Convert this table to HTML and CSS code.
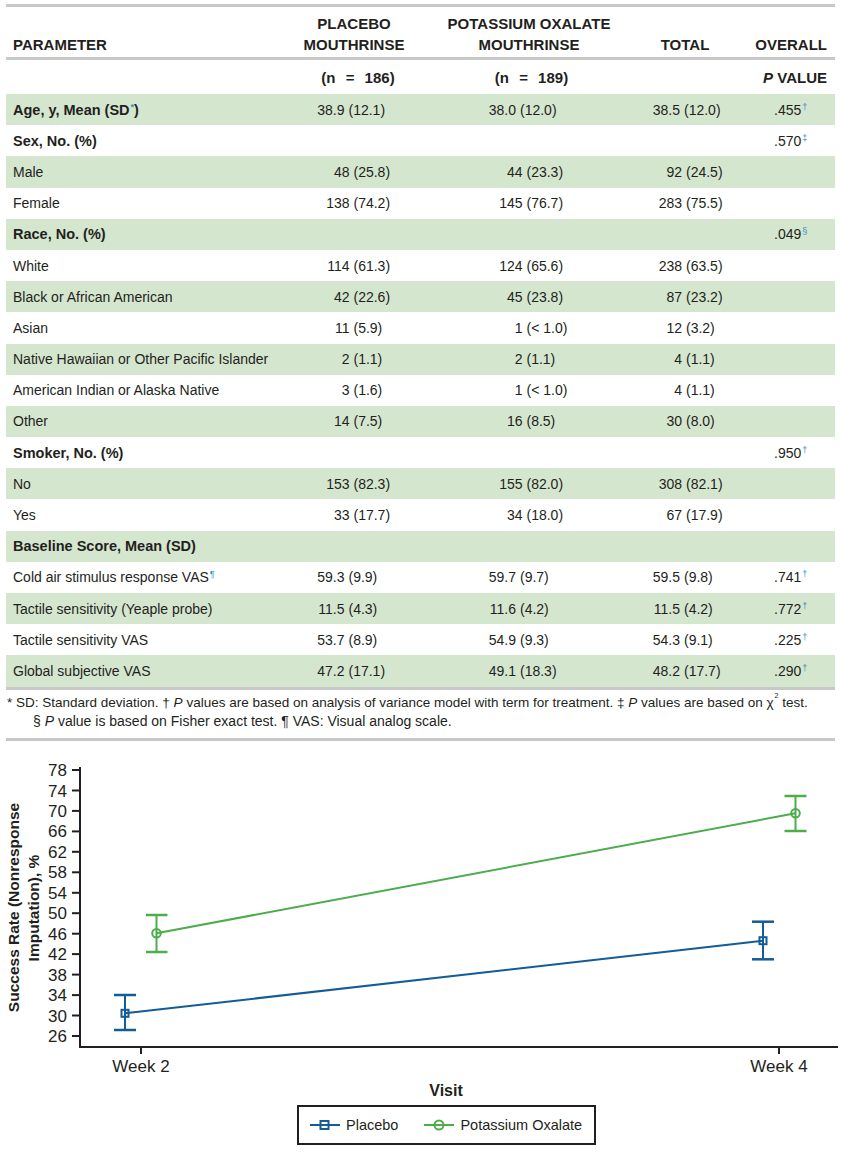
FILE: index.html
```html
<!DOCTYPE html>
<html lang="en">
<head>
<meta charset="utf-8">
<title>Demographics and success rate</title>
<link rel="stylesheet" href="styles.css">
</head>
<body>
<div class="page">
  <div class="tbl">
    <div class="row hrow">
      <div class="c1">PARAMETER</div>
      <div class="c2 ctr">PLACEBO<br>MOUTHRINSE</div>
      <div class="c3 ctr">POTASSIUM OXALATE<br>MOUTHRINSE</div>
      <div class="c4 ctr">TOTAL</div>
      <div class="c5 rgt">OVERALL</div>
    </div>
    <div class="row nrow">
      <div class="c1"></div>
      <div class="c2 ctr n2">(n = 186)</div>
      <div class="c3 ctr n3">(n = 189)</div>
      <div class="c4"></div>
      <div class="c5 rgt"><i>P</i> VALUE</div>
    </div>
    <div class="tbody">
      <div class="row brow grp">
        <div class="c1">Age, y, Mean (SD<sup class="fn">*</sup>)</div>
        <div class="v v2 m"><span class="l">38.9</span>(12.1)</div>
        <div class="v v3 m"><span class="l">38.0</span>(12.0)</div>
        <div class="v v4 m"><span class="l">38.5</span>(12.0)</div>
        <div class="pv">.455<sup class="fn">†</sup></div>
      </div>
      <div class="row brow grp">
        <div class="c1">Sex, No. (%)</div>
        <div></div><div></div><div></div>
        <div class="pv">.570<sup class="fn">‡</sup></div>
      </div>
      <div class="row brow">
        <div class="c1">Male</div>
        <div class="v v2"><span class="l">48</span>(25.8)</div>
        <div class="v v3"><span class="l">44</span>(23.3)</div>
        <div class="v v4"><span class="l">92</span>(24.5)</div>
        <div class="pv"></div>
      </div>
      <div class="row brow">
        <div class="c1">Female</div>
        <div class="v v2"><span class="l">138</span>(74.2)</div>
        <div class="v v3"><span class="l">145</span>(76.7)</div>
        <div class="v v4"><span class="l">283</span>(75.5)</div>
        <div class="pv"></div>
      </div>
      <div class="row brow grp">
        <div class="c1">Race, No. (%)</div>
        <div></div><div></div><div></div>
        <div class="pv">.049<sup class="fn">§</sup></div>
      </div>
      <div class="row brow">
        <div class="c1">White</div>
        <div class="v v2"><span class="l">114</span>(61.3)</div>
        <div class="v v3"><span class="l">124</span>(65.6)</div>
        <div class="v v4"><span class="l">238</span>(63.5)</div>
        <div class="pv"></div>
      </div>
      <div class="row brow">
        <div class="c1">Black or African American</div>
        <div class="v v2"><span class="l">42</span>(22.6)</div>
        <div class="v v3"><span class="l">45</span>(23.8)</div>
        <div class="v v4"><span class="l">87</span>(23.2)</div>
        <div class="pv"></div>
      </div>
      <div class="row brow">
        <div class="c1">Asian</div>
        <div class="v v2"><span class="l">11</span>(5.9)</div>
        <div class="v v3"><span class="l">1</span>(&lt; 1.0)</div>
        <div class="v v4"><span class="l">12</span>(3.2)</div>
        <div class="pv"></div>
      </div>
      <div class="row brow">
        <div class="c1">Native Hawaiian or Other Pacific Islander</div>
        <div class="v v2"><span class="l">2</span>(1.1)</div>
        <div class="v v3"><span class="l">2</span>(1.1)</div>
        <div class="v v4"><span class="l">4</span>(1.1)</div>
        <div class="pv"></div>
      </div>
      <div class="row brow">
        <div class="c1">American Indian or Alaska Native</div>
        <div class="v v2"><span class="l">3</span>(1.6)</div>
        <div class="v v3"><span class="l">1</span>(&lt; 1.0)</div>
        <div class="v v4"><span class="l">4</span>(1.1)</div>
        <div class="pv"></div>
      </div>
      <div class="row brow">
        <div class="c1">Other</div>
        <div class="v v2"><span class="l">14</span>(7.5)</div>
        <div class="v v3"><span class="l">16</span>(8.5)</div>
        <div class="v v4"><span class="l">30</span>(8.0)</div>
        <div class="pv"></div>
      </div>
      <div class="row brow grp">
        <div class="c1">Smoker, No. (%)</div>
        <div></div><div></div><div></div>
        <div class="pv">.950<sup class="fn">†</sup></div>
      </div>
      <div class="row brow">
        <div class="c1">No</div>
        <div class="v v2"><span class="l">153</span>(82.3)</div>
        <div class="v v3"><span class="l">155</span>(82.0)</div>
        <div class="v v4"><span class="l">308</span>(82.1)</div>
        <div class="pv"></div>
      </div>
      <div class="row brow">
        <div class="c1">Yes</div>
        <div class="v v2"><span class="l">33</span>(17.7)</div>
        <div class="v v3"><span class="l">34</span>(18.0)</div>
        <div class="v v4"><span class="l">67</span>(17.9)</div>
        <div class="pv"></div>
      </div>
      <div class="row brow grp">
        <div class="c1">Baseline Score, Mean (SD)</div>
        <div></div><div></div><div></div><div></div>
      </div>
      <div class="row brow">
        <div class="c1">Cold air stimulus response VAS<sup class="fn">¶</sup></div>
        <div class="v v2 m"><span class="l">59.3</span>(9.9)</div>
        <div class="v v3 m"><span class="l">59.7</span>(9.7)</div>
        <div class="v v4 m"><span class="l">59.5</span>(9.8)</div>
        <div class="pv">.741<sup class="fn">†</sup></div>
      </div>
      <div class="row brow">
        <div class="c1">Tactile sensitivity (Yeaple probe)</div>
        <div class="v v2 m"><span class="l">11.5</span>(4.3)</div>
        <div class="v v3 m"><span class="l">11.6</span>(4.2)</div>
        <div class="v v4 m"><span class="l">11.5</span>(4.2)</div>
        <div class="pv">.772<sup class="fn">†</sup></div>
      </div>
      <div class="row brow">
        <div class="c1">Tactile sensitivity VAS</div>
        <div class="v v2 m"><span class="l">53.7</span>(8.9)</div>
        <div class="v v3 m"><span class="l">54.9</span>(9.3)</div>
        <div class="v v4 m"><span class="l">54.3</span>(9.1)</div>
        <div class="pv">.225<sup class="fn">†</sup></div>
      </div>
      <div class="row brow">
        <div class="c1">Global subjective VAS</div>
        <div class="v v2 m"><span class="l">47.2</span>(17.1)</div>
        <div class="v v3 m"><span class="l">49.1</span>(18.3)</div>
        <div class="v v4 m"><span class="l">48.2</span>(17.7)</div>
        <div class="pv">.290<sup class="fn">†</sup></div>
      </div>
    </div>
  </div>

  <div class="notes">
    <div class="note1">* SD: Standard deviation. † <i>P</i> values are based on analysis of variance model with term for treatment. ‡ <i>P</i> values are based on <span class="chi">χ<sup>2</sup></span> test.</div>
    <div class="note2">§ <i>P</i> value is based on Fisher exact test. ¶ VAS: Visual analog scale.</div>
  </div>
  <div class="rule"></div>

  <svg class="chart" width="841" height="355" viewBox="0 745 841 355">
    <g class="ax">
      <line x1="80" y1="767" x2="80" y2="1048"/>
      <line x1="79" y1="1047" x2="838" y2="1047"/>
      <line x1="72" y1="770" x2="80" y2="770"/>
      <line x1="72" y1="790.5" x2="80" y2="790.5"/>
      <line x1="72" y1="810.9" x2="80" y2="810.9"/>
      <line x1="72" y1="831.4" x2="80" y2="831.4"/>
      <line x1="72" y1="851.8" x2="80" y2="851.8"/>
      <line x1="72" y1="872.3" x2="80" y2="872.3"/>
      <line x1="72" y1="892.8" x2="80" y2="892.8"/>
      <line x1="72" y1="913.2" x2="80" y2="913.2"/>
      <line x1="72" y1="933.7" x2="80" y2="933.7"/>
      <line x1="72" y1="954.1" x2="80" y2="954.1"/>
      <line x1="72" y1="974.6" x2="80" y2="974.6"/>
      <line x1="72" y1="995.1" x2="80" y2="995.1"/>
      <line x1="72" y1="1015.5" x2="80" y2="1015.5"/>
      <line x1="72" y1="1036" x2="80" y2="1036"/>
      <line x1="141" y1="1047" x2="141" y2="1054"/>
      <line x1="779" y1="1047" x2="779" y2="1054"/>
    </g>
    <g class="ytl">
      <text x="67" y="776">78</text>
      <text x="67" y="796.5">74</text>
      <text x="67" y="816.9">70</text>
      <text x="67" y="837.4">66</text>
      <text x="67" y="857.8">62</text>
      <text x="67" y="878.3">58</text>
      <text x="67" y="898.8">54</text>
      <text x="67" y="919.2">50</text>
      <text x="67" y="939.7">46</text>
      <text x="67" y="960.1">42</text>
      <text x="67" y="980.6">38</text>
      <text x="67" y="1001.1">34</text>
      <text x="67" y="1021.5">30</text>
      <text x="67" y="1042">26</text>
    </g>
    <g class="xtl">
      <text x="141" y="1072">Week 2</text>
      <text x="779" y="1072">Week 4</text>
    </g>
    <text class="xtitle" x="446" y="1096">Visit</text>
    <text class="ytitle" transform="translate(18.5 907.5) rotate(-90)">Success Rate (Nonresponse</text>
    <text class="ytitle" transform="translate(38.5 908) rotate(-90)">Imputation), %</text>

    <g class="ser blue">
      <line x1="125" y1="1013.3" x2="763" y2="940.7"/>
      <line x1="125" y1="995" x2="125" y2="1030"/>
      <line class="cap" x1="114" y1="995" x2="136" y2="995"/>
      <line class="cap" x1="114" y1="1030" x2="136" y2="1030"/>
      <rect x="121.5" y="1009.8" width="7" height="7"/>
      <line x1="763" y1="921.7" x2="763" y2="959.3"/>
      <line class="cap" x1="752" y1="921.7" x2="774" y2="921.7"/>
      <line class="cap" x1="752" y1="959.3" x2="774" y2="959.3"/>
      <rect x="759.5" y="937.2" width="7" height="7"/>
    </g>
    <g class="ser green">
      <line x1="156.5" y1="933.3" x2="795.5" y2="813.3"/>
      <line x1="156.5" y1="915" x2="156.5" y2="952"/>
      <line class="cap" x1="146" y1="915" x2="167.5" y2="915"/>
      <line class="cap" x1="146" y1="952" x2="167.5" y2="952"/>
      <circle cx="156.5" cy="933.3" r="4.3"/>
      <line x1="795.5" y1="796" x2="795.5" y2="831"/>
      <line class="cap" x1="784.5" y1="796" x2="806.5" y2="796"/>
      <line class="cap" x1="784.5" y1="831" x2="806.5" y2="831"/>
      <circle cx="795.5" cy="813.3" r="4.3"/>
    </g>
  </svg>

  <div class="legend">
    <div class="item">
      <svg class="key" width="30" height="14" viewBox="0 0 30 14">
        <g class="ser blue">
          <line x1="0" y1="7" x2="30" y2="7"/>
          <rect x="10.5" y="3" width="8" height="8"/>
        </g>
      </svg>
      <span>Placebo</span>
    </div>
    <div class="item item2">
      <svg class="key" width="30" height="14" viewBox="0 0 30 14">
        <g class="ser green">
          <line x1="0" y1="7" x2="30" y2="7"/>
          <circle cx="15" cy="7" r="4.5"/>
        </g>
      </svg>
      <span>Potassium Oxalate</span>
    </div>
  </div>
</div>
</body>
</html>
```

FILE: styles.css
```css
* { box-sizing: border-box; }
html, body { background: #ffffff; }
body {
  margin: 0;
  color: #231f20;
  font-family: "Liberation Sans", Arial, sans-serif;
}
.page {
  width: 841px;
  padding: 4px 6px 0;
}

/* table */
.tbl {
  border-top: 3px solid #c8c8c8;
  border-bottom: 3px solid #c8c8c8;
}
.row {
  display: grid;
  grid-template-columns: 294px 108px 242px 70px 115px;
  white-space: nowrap;
}
.c1 { padding-left: 7px; }
.ctr { text-align: center; }
.rgt { text-align: right; padding-right: 8px; }

.hrow {
  height: 53px;
  align-items: end;
  padding-bottom: 2px;
  border-bottom: 3px solid #c8c8c8;
  font-weight: bold;
  font-size: 15px;
  line-height: 21px;
}
.nrow {
  height: 34px;
  align-items: center;
  font-weight: bold;
  font-size: 15px;
  word-spacing: 6px;
}
.nrow .c5 { word-spacing: 0; }
.n2 { padding-left: 8px; }
.n3 { padding-left: 5px; }

.brow {
  height: 31.2px;
  align-items: center;
  font-size: 14px;
}
.tbody .brow:nth-child(odd) { background: #d5e6cf; }
.grp .c1 { font-weight: bold; font-size: 14.5px; }

.v .l {
  display: inline-block;
  width: 30px;
  margin-right: 4px;
  text-align: right;
}
.v2 { padding-left: 19.5px; }
.v2.m { padding-left: 14.5px; }
.v3 { padding-left: 84.5px; }
.v3.m { padding-left: 78px; }
.v4 { padding-left: 2px; }
.v4.m { padding-left: 0; }
.pv { padding-left: 54px; }

.fn {
  color: #3a8cc9;
  font-size: 9px;
  line-height: 0;
  vertical-align: 5px;
  margin-left: 1px;
}

/* notes */
.notes {
  margin-top: 3px;
  font-size: 14px;
  line-height: 19px;
  white-space: nowrap;
}
.note1 { padding-left: 1px; font-size: 13.5px; }
.note2 { padding-left: 27px; }
.chi sup {
  font-size: 7px;
  line-height: 0;
  vertical-align: 9px;
  margin-left: 1px;
}
.rule {
  margin-top: 7px;
  border-top: 3px solid #c8c8c8;
}

/* chart */
.chart {
  display: block;
  margin: 4px 0 0 -6px;
  overflow: visible;
}
.ax line { stroke: #231f20; stroke-width: 2; }
.ytl text {
  font-family: "Liberation Sans", Arial, sans-serif;
  font-size: 17px;
  fill: #231f20;
  text-anchor: end;
}
.xtl text {
  font-family: "Liberation Sans", Arial, sans-serif;
  font-size: 17px;
  fill: #231f20;
  text-anchor: middle;
}
.xtitle, .ytitle {
  font-family: "Liberation Sans", Arial, sans-serif;
  font-weight: bold;
  fill: #231f20;
  text-anchor: middle;
}
.xtitle { font-size: 16px; }
.ytitle { font-size: 15.5px; }

.ser line, .ser rect, .ser circle {
  fill: none;
  stroke-width: 2;
}
.ser .cap { stroke-width: 2.5; }
.blue line, .blue rect { stroke: #135c97; }
.green line, .green circle { stroke: #4cad4b; }

/* legend */
.legend {
  display: flex;
  align-items: center;
  width: 299px;
  height: 40px;
  margin: 5px 0 0 291px;
  padding-left: 11px;
  border: 2px solid #231f20;
  font-size: 14.5px;
}
.item {
  display: flex;
  align-items: center;
  gap: 6px;
}
.item2 { margin-left: 26px; }
.key { display: block; }
```
